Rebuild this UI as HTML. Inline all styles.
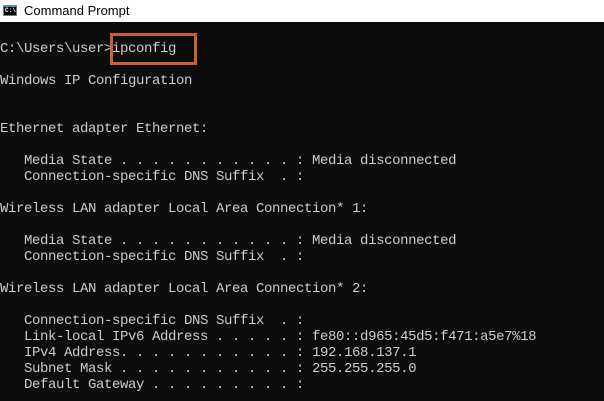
<!DOCTYPE html>
<html><head><meta charset="utf-8"><style>
html,body{margin:0;padding:0;width:604px;height:401px;overflow:hidden;background:#0c0c0c;}
.title{position:absolute;left:0;top:0;width:604px;height:22px;background:#fff;}
.title span{position:absolute;left:24px;top:3px;font:13px "Liberation Sans",sans-serif;color:#000;}
.icon{position:absolute;left:3px;top:5px;width:14px;height:11px;background:#000;border:1px solid #6a7a8a;box-sizing:border-box;border-top:2px solid #5a8ac0;}
.icon i{position:absolute;left:1px;top:1px;font:bold 6px "Liberation Mono",monospace;color:#fff;font-style:normal;line-height:6px;}
pre{position:absolute;left:0;top:41px;margin:0;font:14px/16px "Liberation Mono",monospace;letter-spacing:-0.4px;color:#cccccc;}
.box{position:absolute;left:110px;top:33px;width:87px;height:32px;border:3px solid #c8622a;box-sizing:border-box;}
</style></head><body>
<div class="title"><div class="icon"><i>C:\</i></div><span>Command Prompt</span></div>
<pre>C:\Users\user&gt;ipconfig

Windows IP Configuration


Ethernet adapter Ethernet:

   Media State . . . . . . . . . . . : Media disconnected
   Connection-specific DNS Suffix  . :

Wireless LAN adapter Local Area Connection* 1:

   Media State . . . . . . . . . . . : Media disconnected
   Connection-specific DNS Suffix  . :

Wireless LAN adapter Local Area Connection* 2:

   Connection-specific DNS Suffix  . :
   Link-local IPv6 Address . . . . . : fe80::d965:45d5:f471:a5e7%18
   IPv4 Address. . . . . . . . . . . : 192.168.137.1
   Subnet Mask . . . . . . . . . . . : 255.255.255.0
   Default Gateway . . . . . . . . . :</pre>
<div class="box"></div>
</body></html>
